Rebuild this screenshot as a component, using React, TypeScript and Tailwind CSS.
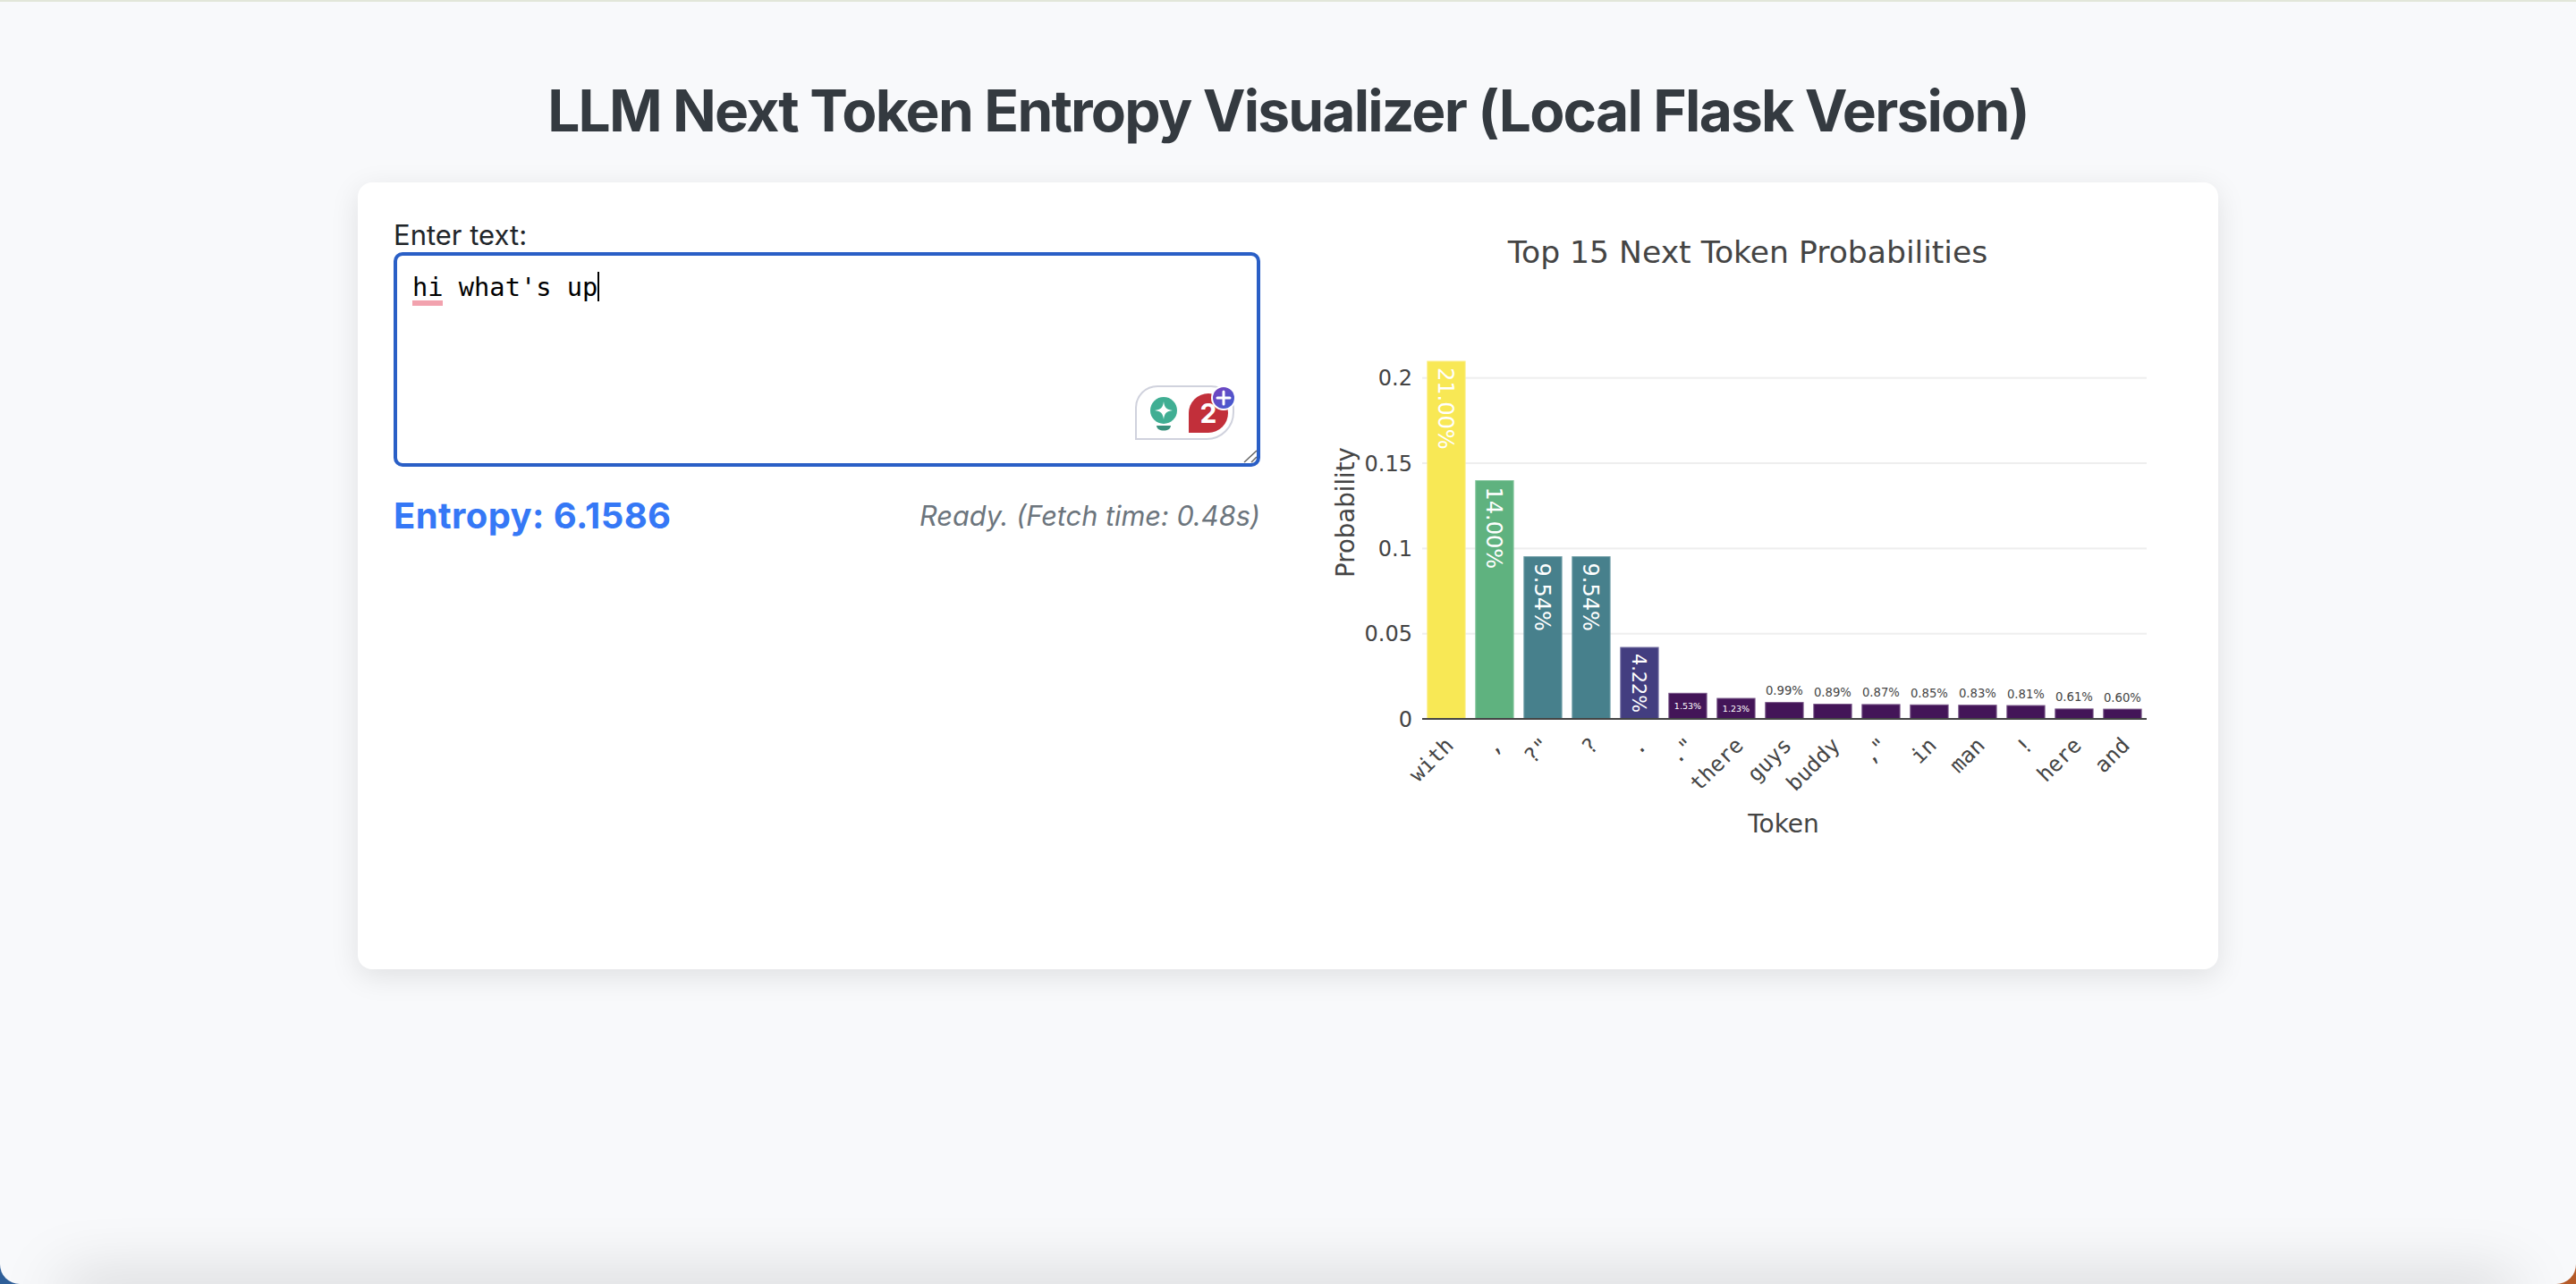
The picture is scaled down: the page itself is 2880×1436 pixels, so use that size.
const bars = [
  { token: "with", p: 0.21, label: "21.00%", color: "#f8e855", edge: "#fbef88", size: 24 },
  { token: ",", p: 0.14, label: "14.00%", color: "#5fb27f", edge: "#86c69f", size: 24 },
  { token: '?"', p: 0.0954, label: "9.54%", color: "#47808c", edge: "#76a1aa", size: 24 },
  { token: "?", p: 0.0954, label: "9.54%", color: "#47808c", edge: "#76a1aa", size: 24 },
  { token: ".", p: 0.0422, label: "4.22%", color: "#433e80", edge: "#7672a3", size: 20.8 },
  { token: '."', p: 0.0153, label: "1.53%", color: "#431558", edge: "#7b5a8b", size: 9.5 },
  { token: "there", p: 0.0123, label: "1.23%", color: "#431558", edge: "#7b5a8b", size: 9.5 },
  { token: "guys", p: 0.0099, label: "0.99%", color: "#431558", edge: "#7b5a8b", size: 13.2 },
  { token: "buddy", p: 0.0089, label: "0.89%", color: "#431558", edge: "#7b5a8b", size: 13.2 },
  { token: ',"', p: 0.0087, label: "0.87%", color: "#431558", edge: "#7b5a8b", size: 13.2 },
  { token: "in", p: 0.0085, label: "0.85%", color: "#431558", edge: "#7b5a8b", size: 13.2 },
  { token: "man", p: 0.0083, label: "0.83%", color: "#431558", edge: "#7b5a8b", size: 13.2 },
  { token: "!", p: 0.0081, label: "0.81%", color: "#431558", edge: "#7b5a8b", size: 13.2 },
  { token: "here", p: 0.0061, label: "0.61%", color: "#431558", edge: "#7b5a8b", size: 13.2 },
  { token: "and", p: 0.006, label: "0.60%", color: "#431558", edge: "#7b5a8b", size: 13.2 },
];

const ticks = [
  { label: "0.2", y: 422.7 },
  { label: "0.15", y: 518 },
  { label: "0.1", y: 613.4 },
  { label: "0.05", y: 708.7 },
];

const BASE_Y = 804;
const BAR_W = 43.3;

const sans = '"DejaVu Sans", Verdana, sans-serif';
const mono = '"DejaVu Sans Mono", monospace';

// viewBox is in page coordinates so numbers can be read straight off the chart
const Chart = () => (
  <svg viewBox="1440 244 1000 800" className="w-[1000px] h-[800px] shrink-0">
    <text x={1954} y={294} textAnchor="middle" fontSize={34.6} fill="#444" fontFamily={sans}>
      Top 15 Next Token Probabilities
    </text>
    {ticks.map((t) => (
      <g key={t.label}>
        <rect x={1590} y={t.y - 1} width={810} height={2} fill="#eeeeee" />
        <text x={1579} y={t.y + 8.5} textAnchor="end" fontSize={24} fill="#444" fontFamily={sans}>
          {t.label}
        </text>
      </g>
    ))}
    <text x={1579} y={812.5} textAnchor="end" fontSize={24} fill="#444" fontFamily={sans}>
      0
    </text>
    <text
      transform="translate(1514 573) rotate(-90)"
      textAnchor="middle"
      fontSize={27.6}
      fill="#444"
      fontFamily={sans}
    >
      Probability
    </text>
    {bars.map((b, i) => {
      const x = 1595.3 + i * 54;
      const cx = x + BAR_W / 2;
      const h = b.p * 1907;
      const top = BASE_Y - h;
      return (
        <g key={i}>
          <rect x={x + 0.5} y={top + 0.5} width={BAR_W - 1} height={h} fill={b.color} stroke={b.edge} strokeWidth={1} />
          {i < 5 && (
            <text
              transform={`translate(${cx - b.size * 0.375} ${top + 7.5}) rotate(90)`}
              fontSize={b.size}
              fill="#fff"
              fontFamily={sans}
            >
              {b.label}
            </text>
          )}
          {(i === 5 || i === 6) && (
            <text x={cx} y={top + h / 2 + 3.5} textAnchor="middle" fontSize={b.size} fill="#fff" fontFamily={sans}>
              {b.label}
            </text>
          )}
          {i > 6 && (
            <text x={cx} y={top - 8} textAnchor="middle" fontSize={b.size} fill="#444" fontFamily={sans}>
              {b.label}
            </text>
          )}
          <text
            transform={`translate(${cx + 9.5} 835) rotate(-45)`}
            textAnchor="end"
            fontSize={24}
            fill="#444"
            fontFamily={mono}
          >
            {b.token}
          </text>
        </g>
      );
    })}
    <rect x={1590} y={803} width={810} height={2} fill="#444" />
    <text x={1994} y={931} textAnchor="middle" fontSize={28} fill="#444" fontFamily={sans}>
      Token
    </text>
  </svg>
);

const GrammarWidget = () => (
  <svg viewBox="0 0 120 72" className="absolute left-[824px] top-[145px] w-[120px] h-[72px]">
    <defs>
      <linearGradient id="plusBadge" x1="0" y1="0" x2="1" y2="1">
        <stop offset="0" stopColor="#7a3fbd" />
        <stop offset="1" stopColor="#3f5fd2" />
      </linearGradient>
    </defs>
    <path
      d="M6 64 V29 A24 24 0 0 1 30 5 H90 A25 25 0 0 1 115 30 V34 A30 30 0 0 1 85 64 Z"
      fill="#fff"
      stroke="#d0d2dd"
      strokeWidth={2}
    />
    <circle cx={37} cy={32} r={15} fill="#40ae93" />
    <path d="M37 22 C38 29 40 31 47 32 C40 33 38 35 37 42 C36 35 34 33 27 32 C34 31 36 29 37 22 Z" fill="#fff" />
    <path d="M29 49 H45 C44.5 53 41.5 54.5 37 54.5 C32.5 54.5 29.5 53 29 49 Z" fill="#39917d" />
    <path d="M65 57 V35 A22 22 0 0 1 87 13 A22 22 0 0 1 109 35 A22 22 0 0 1 87 57 Z" fill="#c22f3a" />
    <text x={87} y={46} textAnchor="middle" fontSize={30} fontWeight={700} fill="#fff" fontFamily="Inter, sans-serif">
      2
    </text>
    <circle cx={104} cy={18} r={14} fill="#fff" />
    <circle cx={104} cy={18} r={12} fill="url(#plusBadge)" />
    <path d="M104 11 V25 M97 18 H111" stroke="#fff" strokeWidth={3} strokeLinecap="round" />
  </svg>
);

const ResizeGrip = () => (
  <svg viewBox="0 0 16 16" className="absolute left-[950px] top-[221px] w-[16px] h-[16px]">
    <path d="M1 14 L15 1 M9 14 L15 8" stroke="#666" strokeWidth={1.5} fill="none" />
  </svg>
);

export default function App() {
  return (
    <div className="h-[1436px] overflow-hidden bg-[linear-gradient(to_right,#2f5f99_0%,#2f5f99_50%,#b55a28_50%,#b55a28_100%)] font-['Inter',sans-serif]">
      <div className="relative h-full overflow-hidden rounded-b-[22px] bg-[#f8f9fb] border-t-2 border-[#e2e6d9]">
        <main className="flex flex-col items-center">
          <h1 className="mt-[84px] mb-[42px] text-[64px] leading-[76px] tracking-[-1.8px] font-bold text-[#343a40]">
            LLM Next Token Entropy Visualizer (Local Flask Version)
          </h1>
          <div className="flex w-[2080px] h-[880px] gap-[31px] rounded-[16px] bg-white pt-[40px] pl-[40px] pr-[40px] shadow-[0_8px_32px_rgba(0,0,0,0.1)]">
            <div className="w-[969px] shrink-0">
              <label className="block text-[31px] leading-[38px] text-[#212529]">Enter text:</label>
              <div className="relative h-[240px]">
                <textarea
                  readOnly
                  defaultValue="hi what's up"
                  className="block w-full h-full resize-none rounded-[10px] border-4 border-[#2a5fc6] bg-white pt-[16px] pl-[17px] pr-[17px] text-[28.7px] leading-[38px] text-black outline-none font-['DejaVu_Sans_Mono',monospace]"
                />
                <span className="absolute left-[21px] top-[54px] h-[6px] w-[34px] bg-[#f2a2ae]" />
                <span className="absolute left-[228px] top-[22px] h-[33px] w-[2px] bg-black" />
                <GrammarWidget />
                <ResizeGrip />
              </div>
              <div className="mt-[31px] flex items-center justify-between">
                <span className="text-[40px] leading-[48px] tracking-[0.4px] font-bold text-[#3578f6]">Entropy: 6.1586</span>
                <span className="text-[30.7px] leading-[48px] italic text-[#6c757d]">Ready. (Fetch time: 0.48s)</span>
              </div>
            </div>
            <Chart />
          </div>
        </main>
        <div className="absolute bottom-[-24px] left-[70px] right-[70px] h-[24px] shadow-[0_0_70px_rgba(0,0,0,0.28)]" />
      </div>
    </div>
  );
}
